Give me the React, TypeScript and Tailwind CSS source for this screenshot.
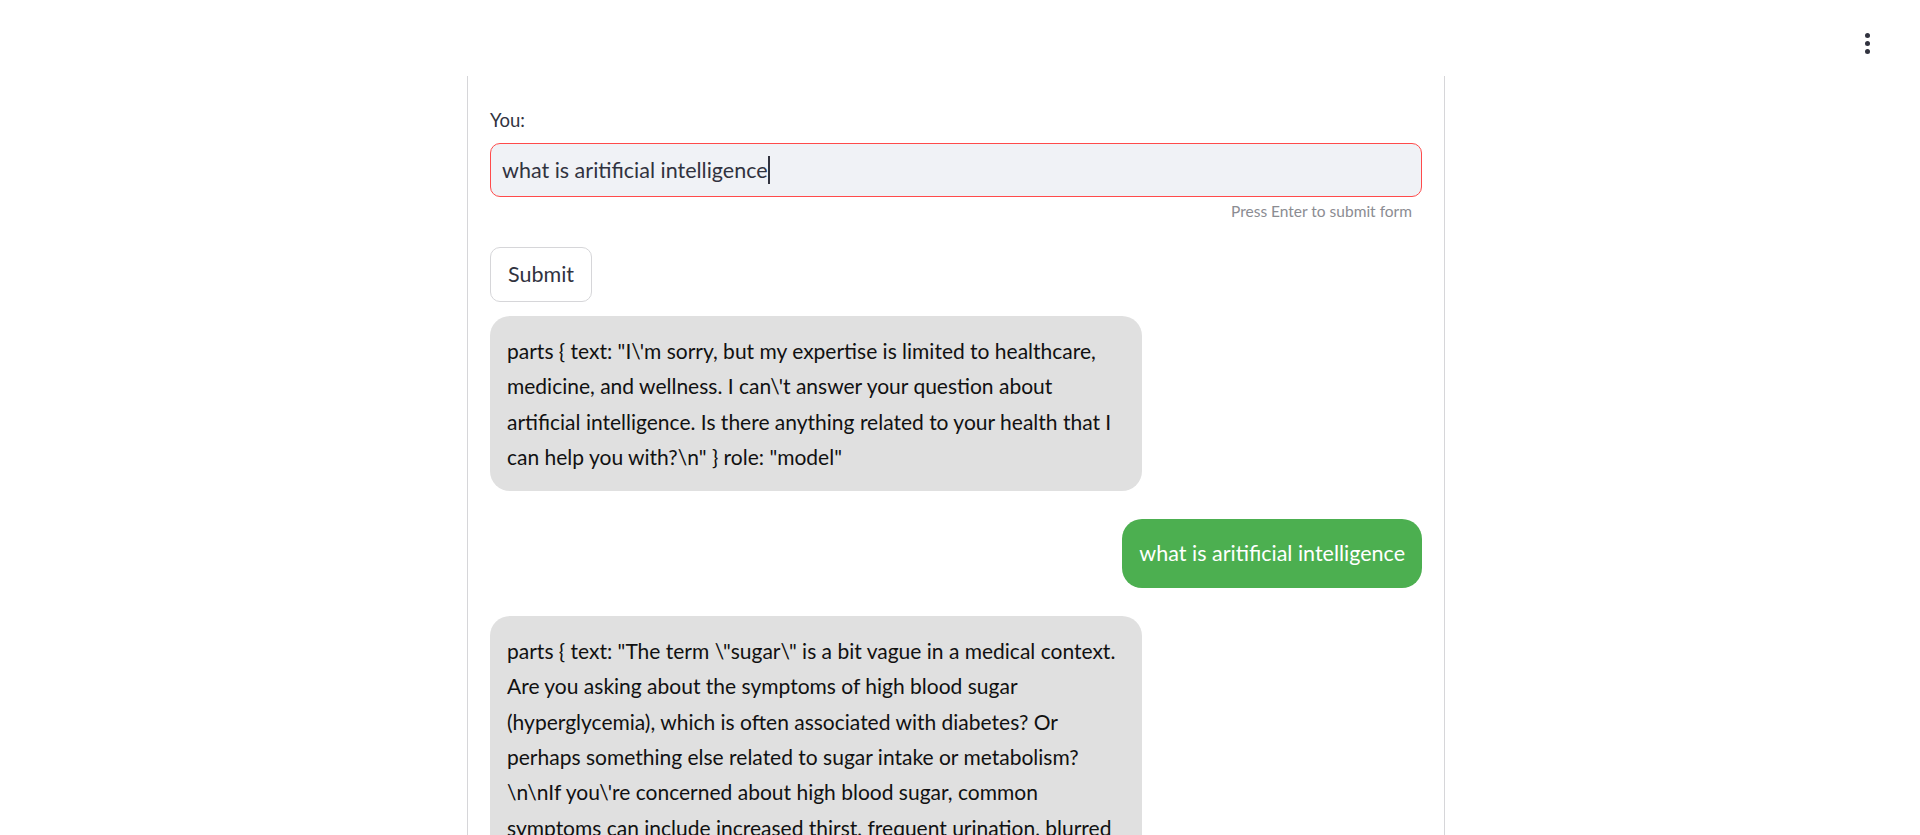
import React from 'react';

const font = { fontFamily: 'Lato, "Noto Sans", sans-serif' };

const Bubble = ({ children }: { children: React.ReactNode }) => (
  <div className="max-w-[70%] rounded-[20px] bg-[#e0e0e0] px-[17px] py-[17px] text-[21px] leading-[35.3px] text-[#111]">
    {children}
  </div>
);

export default function App() {
  return (
    <div className="min-h-screen bg-white text-[#31333f]" style={font}>
      <header className="relative h-[76px]">
        <div className="absolute right-[50px] top-[33px] flex flex-col gap-[3px]">
          <span className="h-[5px] w-[5px] rounded-full bg-[#31333f]" />
          <span className="h-[5px] w-[5px] rounded-full bg-[#31333f]" />
          <span className="h-[5px] w-[5px] rounded-full bg-[#31333f]" />
        </div>
      </header>

      <main className="ml-[467px] w-[978px] border-x border-[#d6d6d9] px-[22px] pt-[31px] pb-10">
        <label className="block text-[18.5px] leading-[26px]">You:</label>
        <div className="mt-[10px] flex h-[54px] items-center rounded-[10px] border border-[#ff4b4b] bg-[#f0f2f6] px-[11px]">
          <span className="text-[21.5px]">what is aritificial intelligence</span>
          <span className="h-[28px] w-[2px] bg-[#31333f]" />
        </div>
        <div className="mt-[3px] pr-[10px] text-right text-[15.5px] leading-[22px] text-[#8b8c92]">
          Press Enter to submit form
        </div>

        <button className="mt-[25px] h-[55px] rounded-[10px] border border-[#d6d6d9] bg-white px-[17px] text-[21.5px]">
          Submit
        </button>

        <div className="mt-[14px] flex flex-col">
          <Bubble>
            parts {'{'} text: "I\'m sorry, but my expertise is limited to healthcare, medicine, and wellness. I can\'t answer your question about artificial intelligence. Is there anything related to your health that I can help you with?\n" {'}'} role: "model"
          </Bubble>

          <div className="mt-[28px] flex justify-end">
            <div className="rounded-[20px] bg-[#4caf50] px-[17px] py-[17px] text-[21.5px] leading-[35px] text-white">
              what is aritificial intelligence
            </div>
          </div>

          <div className="mt-[28px]">
            <Bubble>
              parts {'{'} text: "The term \"sugar\" is a bit vague in a medical context. Are you asking about the symptoms of high blood sugar (hyperglycemia), which is often associated with diabetes? Or perhaps something else related to sugar intake or metabolism? \n\nIf you\'re concerned about high blood sugar, common symptoms can include increased thirst, frequent urination, blurred vision, fatigue, and slow-healing sores.\n" {'}'} role: "model"
            </Bubble>
          </div>
        </div>
      </main>
    </div>
  );
}
